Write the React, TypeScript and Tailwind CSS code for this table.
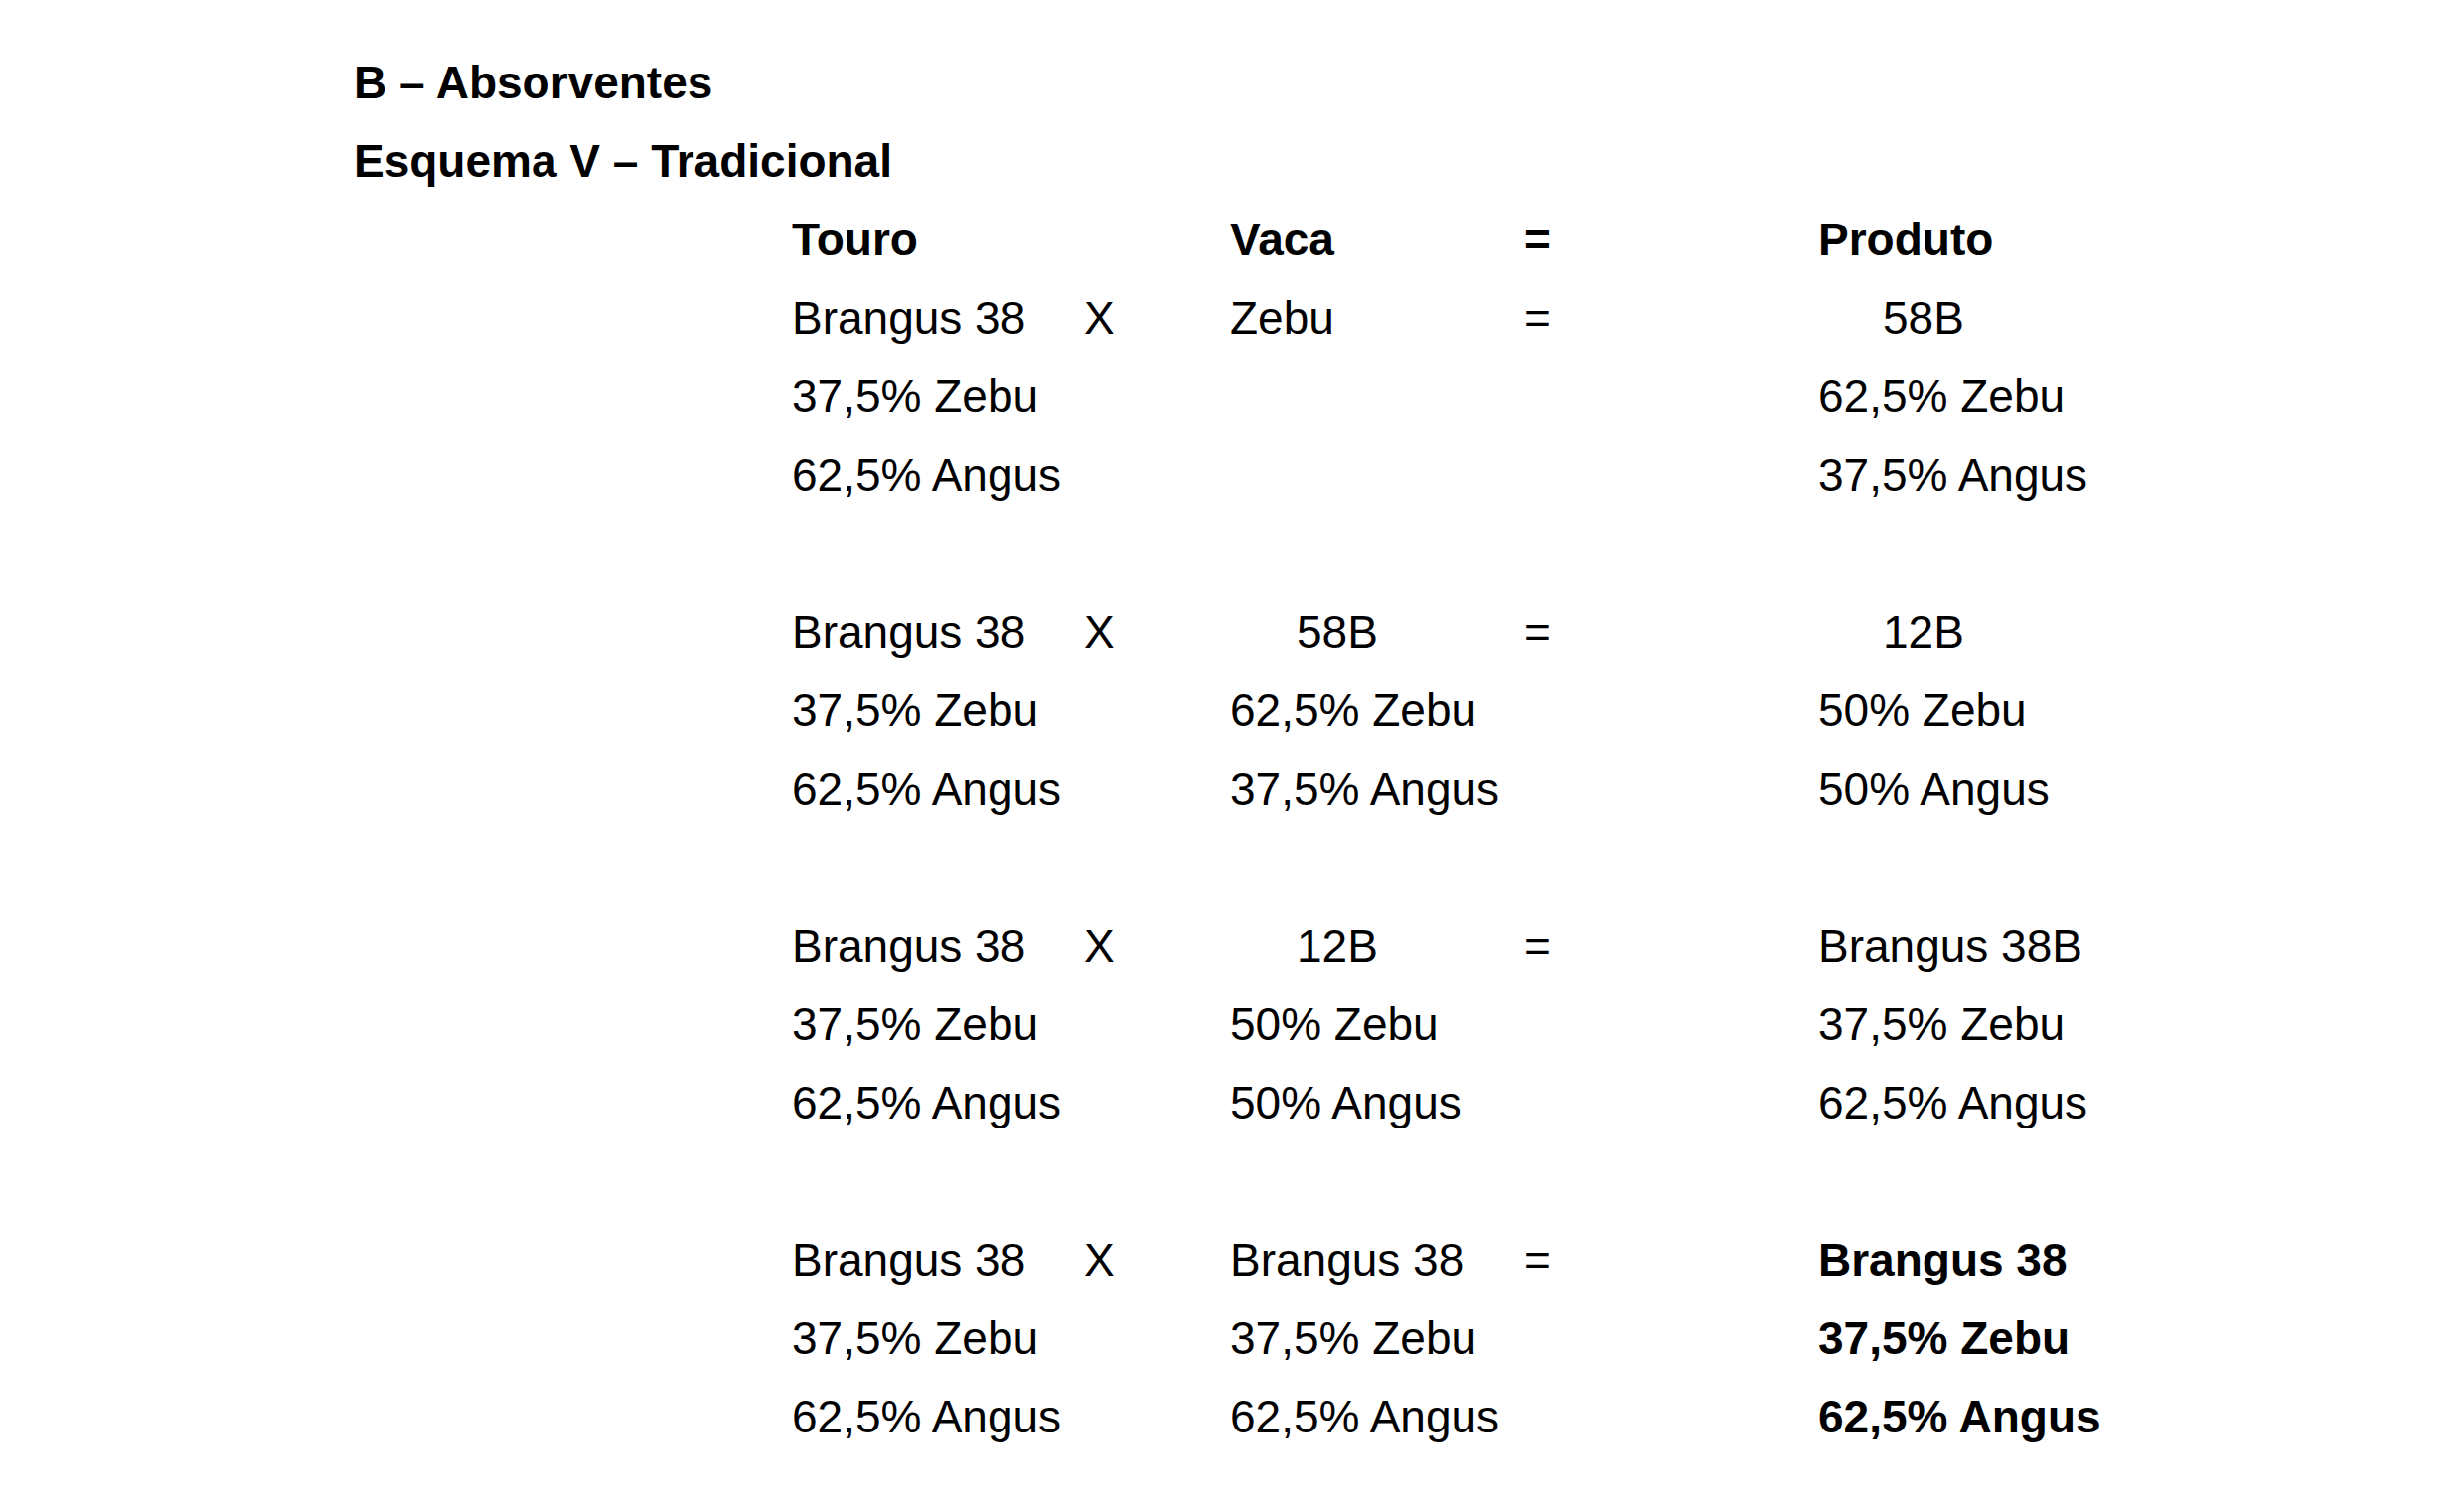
const rows: { touro?: string; x?: string; vaca?: string; eq?: string; produto?: string; vacaIndent?: boolean; prodIndent?: boolean; bold?: boolean; prodBold?: boolean }[] = [
  { touro: "Touro", vaca: "Vaca", eq: "=", produto: "Produto", bold: true },
  { touro: "Brangus 38", x: "X", vaca: "Zebu", eq: "=", produto: "58B", prodIndent: true },
  { touro: "37,5% Zebu", produto: "62,5% Zebu" },
  { touro: "62,5% Angus", produto: "37,5% Angus" },
  {},
  { touro: "Brangus 38", x: "X", vaca: "58B", vacaIndent: true, eq: "=", produto: "12B", prodIndent: true },
  { touro: "37,5% Zebu", vaca: "62,5% Zebu", produto: "50% Zebu" },
  { touro: "62,5% Angus", vaca: "37,5% Angus", produto: "50% Angus" },
  {},
  { touro: "Brangus 38", x: "X", vaca: "12B", vacaIndent: true, eq: "=", produto: "Brangus 38B" },
  { touro: "37,5% Zebu", vaca: "50% Zebu", produto: "37,5% Zebu" },
  { touro: "62,5% Angus", vaca: "50% Angus", produto: "62,5% Angus" },
  {},
  { touro: "Brangus 38", x: "X", vaca: "Brangus 38", eq: "=", produto: "Brangus 38", prodBold: true },
  { touro: "37,5% Zebu", vaca: "37,5% Zebu", produto: "37,5% Zebu", prodBold: true },
  { touro: "62,5% Angus", vaca: "62,5% Angus", produto: "62,5% Angus", prodBold: true },
];

export default function App() {
  return (
    <div
      className="min-h-[1514px] w-[2480px] bg-white pt-[44px] text-black text-[46px] leading-[79px]"
      style={{ fontFamily: '"Liberation Sans", Arial, sans-serif' }}
    >
      <div className="pl-[356px] font-bold">B – Absorventes</div>
      <div className="pl-[356px] font-bold">Esquema V – Tradicional</div>

      <div className="pl-[797px]">
        {rows.map((r, i) => (
          <div key={i} className={`grid grid-cols-[294px_147px_296px_296px_1fr] h-[79px] whitespace-nowrap ${r.bold ? "font-bold" : ""}`}>
            <div>{r.touro}</div>
            <div>{r.x}</div>
            <div className={r.vacaIndent ? "pl-[67px]" : ""}>{r.vaca}</div>
            <div>{r.eq}</div>
            <div className={`${r.prodIndent ? "pl-[65px]" : ""} ${r.prodBold ? "font-bold" : ""}`}>{r.produto}</div>
          </div>
        ))}
      </div>
    </div>
  );
}
